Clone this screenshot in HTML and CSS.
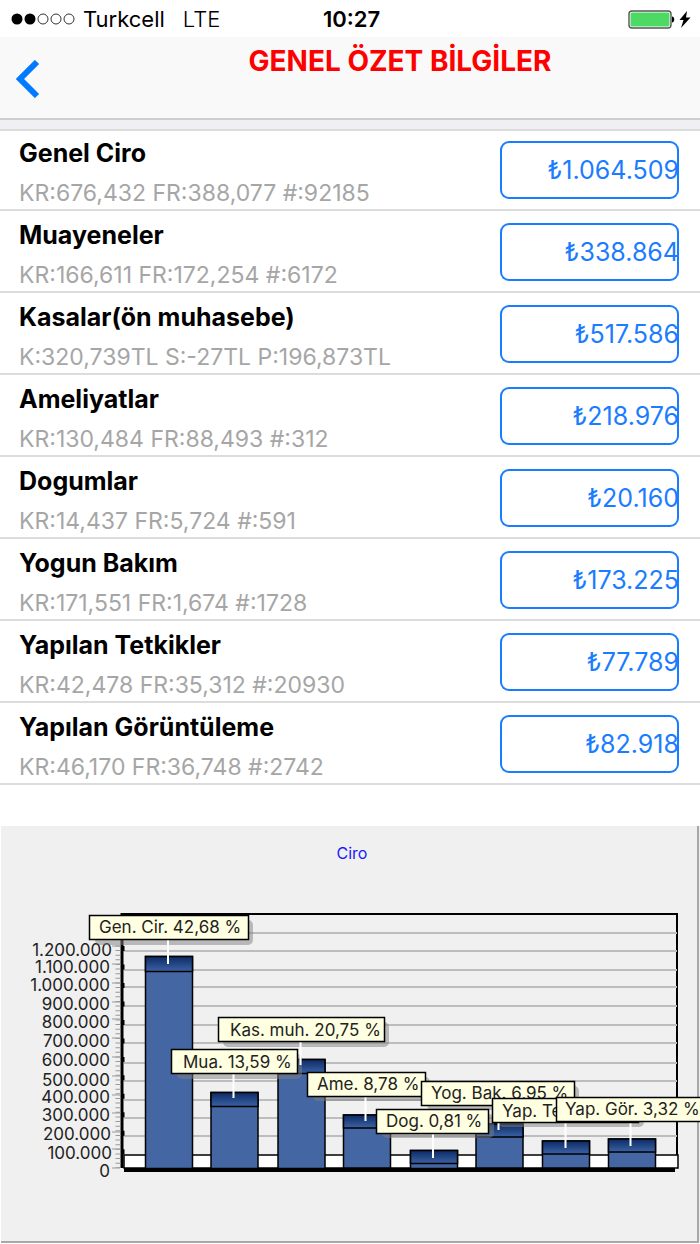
FILE: index.html
```html
<!DOCTYPE html>
<html lang="tr">
<head>
  <meta charset="UTF-8" />
  <meta name="viewport" content="width=device-width, initial-scale=1.0"/>
  <title>Genel Özet Bilgiler</title>
  <link rel="stylesheet" href="styles.css">
</head>
<body>

<div class="status-bar">
  <div class="carrier">
    <svg width="64" height="12" viewBox="0 0 64 12" aria-hidden="true">
      <circle cx="6" cy="6" r="5.5"/>
      <circle cx="19" cy="6" r="5.5"/>
      <circle class="empty" cx="32" cy="6" r="5"/>
      <circle class="empty" cx="45" cy="6" r="5"/>
      <circle class="empty" cx="58" cy="6" r="5"/>
    </svg>
    <span>Turkcell</span>
    <span class="network">LTE</span>
  </div>
  <div class="time">10:27</div>
  <div class="battery">
    <svg width="64" height="20" viewBox="0 0 64 20" aria-hidden="true">
      <rect x="1" y="2" width="42" height="17" rx="3" fill="#fff" stroke="#555" stroke-width="1.4"/>
      <rect x="2.5" y="3.5" width="39" height="14" rx="1.5" fill="#4cd964"/>
      <path d="M44 7.5c3 0 3 6 0 6z" fill="#000"/>
      <path d="M59 2l-7.500 9h4l-2.500 8 9.500-10.500h-4.500z" fill="#000"/>
    </svg>
  </div>
</div>

<header class="nav-bar">
  <button class="back" aria-label="Geri">
    <svg width="24" height="38" viewBox="0 0 24 38" aria-hidden="true">
      <path d="M21 2L4 19l17 17" fill="none" stroke="#007aff" stroke-width="6"/>
    </svg>
  </button>
  <h1>GENEL ÖZET BİLGİLER</h1>
</header>

<ul class="summary-list">
  <li>
    <div class="info"><h2>Genel Ciro</h2><p>KR:676,432 FR:388,077 #:92185</p></div>
    <button class="amount">₺1.064.509</button>
  </li>
  <li>
    <div class="info"><h2>Muayeneler</h2><p>KR:166,611 FR:172,254 #:6172</p></div>
    <button class="amount">₺338.864</button>
  </li>
  <li>
    <div class="info"><h2>Kasalar(ön muhasebe)</h2><p>K:320,739TL S:-27TL P:196,873TL</p></div>
    <button class="amount">₺517.586</button>
  </li>
  <li>
    <div class="info"><h2>Ameliyatlar</h2><p>KR:130,484 FR:88,493 #:312</p></div>
    <button class="amount">₺218.976</button>
  </li>
  <li>
    <div class="info"><h2>Dogumlar</h2><p>KR:14,437 FR:5,724 #:591</p></div>
    <button class="amount">₺20.160</button>
  </li>
  <li>
    <div class="info"><h2>Yogun Bakım</h2><p>KR:171,551 FR:1,674 #:1728</p></div>
    <button class="amount">₺173.225</button>
  </li>
  <li>
    <div class="info"><h2>Yapılan Tetkikler</h2><p>KR:42,478 FR:35,312 #:20930</p></div>
    <button class="amount">₺77.789</button>
  </li>
  <li>
    <div class="info"><h2>Yapılan Görüntüleme</h2><p>KR:46,170 FR:36,748 #:2742</p></div>
    <button class="amount">₺82.918</button>
  </li>
</ul>

<div class="chart">
  <svg viewBox="0 0 700 418" role="img" aria-label="Ciro">
    <defs>
      <linearGradient id="cap" x1="0" y1="0" x2="0" y2="1">
        <stop offset="0" stop-color="#0c2a66"/>
        <stop offset="1" stop-color="#3c62a4"/>
      </linearGradient>
    </defs>

    <text class="chart-title" x="352" y="34">Ciro</text>

    <!-- frame, floor and grid -->
    <path d="M123 89H677V331" fill="none" stroke="#000" stroke-width="2"/>
    <path class="grid" d="M124 108H677M124 126H677M124 145H677M124 162H677M124 181H677M124 200H677M124 218H677M124 238H677M124 256H677M124 275H677M124 293H677M124 311H677"/>
    <rect x="124" y="330" width="554" height="13" fill="#fff" stroke="#000" stroke-width="1.5"/>
    <path d="M124 345H675" stroke="#000" stroke-width="4"/>

    <!-- value axis -->
    <path d="M122 88V343" stroke="#000" stroke-width="3"/>
    <path d="M123 121V343" stroke="#000" stroke-width="3" stroke-dasharray="5 13.480"/>
    <path d="M118 120.500V343" stroke="#999" stroke-width="5" stroke-dasharray="1 3.620"/>
    <path class="ticks" d="M112 121h8M112 139h8M112 158h8M112 177h8M112 194h8M112 213h8M112 232h8M112 251h8M112 270h8M112 288h8M112 307h8M112 324h8M112 343h8"/>
    <g class="axis">
      <text x="112" y="131">1.200.000</text>
      <text x="110" y="148">1.100.000</text>
      <text x="110" y="166">1.000.000</text>
      <text x="110" y="185">900.000</text>
      <text x="110" y="203">800.000</text>
      <text x="110" y="222">700.000</text>
      <text x="110" y="241">600.000</text>
      <text x="110" y="261">500.000</text>
      <text x="110" y="278">400.000</text>
      <text x="110" y="296">300.000</text>
      <text x="111" y="315">200.000</text>
      <text x="112" y="334">100.000</text>
      <text x="110" y="352">0</text>
    </g>

    <!-- bars -->
    <g class="bars">
      <rect x="145.500" y="131.500" width="47" height="212"/>
      <rect x="211" y="267.500" width="47" height="76"/>
      <rect x="278" y="234.500" width="47" height="109"/>
      <rect x="343.500" y="290" width="47" height="53"/>
      <rect x="410.500" y="325.500" width="47" height="18"/>
      <rect x="476" y="299" width="47" height="44"/>
      <rect x="542.500" y="316" width="47" height="27"/>
      <rect x="608.500" y="314" width="47" height="29"/>
    </g>
    <g class="caps">
      <rect x="145.500" y="131.500" width="47" height="15"/>
      <rect x="211" y="267.500" width="47" height="14"/>
      <rect x="278" y="234.500" width="47" height="14"/>
      <rect x="343.500" y="290" width="47" height="13"/>
      <rect x="410.500" y="325.500" width="47" height="13"/>
      <rect x="476" y="299" width="47" height="13"/>
      <rect x="542.500" y="316" width="47" height="13"/>
      <rect x="608.500" y="314" width="47" height="13"/>
    </g>

    <!-- marks -->
    <g class="shadows">
      <rect x="95" y="95" width="158" height="25" rx="5"/>
      <rect x="223" y="197" width="166" height="25" rx="5"/>
      <rect x="177" y="229" width="125" height="25" rx="5"/>
      <rect x="313" y="252" width="117" height="24" rx="5"/>
      <rect x="427" y="261" width="152" height="24" rx="5"/>
      <rect x="382" y="289" width="112" height="24" rx="5"/>
      <rect x="498" y="278" width="146" height="24" rx="5"/>
    </g>
    <path class="leaders" d="M168 115V139M233.500 249V273M300.500 217V240M365.500 271V296M433 309V333M498.500 298V305M565.500 297V323M630.500 297V321"/>
    <g class="marks">
      <rect x="218.500" y="192.500" width="166" height="24"/>
      <text x="230" y="211">Kas. muh. 20,75 %</text>
      <rect x="89.500" y="90.500" width="159" height="24"/>
      <text x="99" y="108">Gen. Cir. 42,68 %</text>
      <rect x="171.500" y="224.500" width="126" height="24"/>
      <text x="183" y="243">Mua. 13,59 %</text>
      <rect x="307.500" y="247.500" width="118" height="24"/>
      <text x="317" y="265">Ame. 8,78 %</text>
      <rect x="376.500" y="284.500" width="112" height="24"/>
      <text x="386" y="302">Dog. 0,81 %</text>
      <rect x="421.500" y="256.500" width="153" height="24"/>
      <text x="431" y="274">Yog. Bak. 6,95 %</text>
      <rect x="492.500" y="273.500" width="146" height="24"/>
      <text x="502" y="292">Yap. Tet. 3,12 %</text>
      <rect x="556.500" y="272.500" width="150" height="24"/>
      <text x="565" y="290">Yap. Gör. 3,32 %</text>
    </g>
  </svg>
</div>

</body>
</html>
```
FILE: styles.css
```css
* {
  box-sizing: border-box;
}

body {
  margin: 0;
  background: #fff;
  color: #000;
  font-family: Inter, "Noto Sans", sans-serif;
}

h1, h2, p, ul {
  margin: 0;
  padding: 0;
}

.status-bar {
  display: grid;
  grid-template-columns: 1fr auto 1fr;
  align-items: center;
  height: 37px;
  padding: 0 8px 0 11px;
  font-size: 22px;
  line-height: 38px;
}

.carrier {
  display: flex;
  align-items: center;
  gap: 8px;
}

.carrier .empty {
  fill: none;
  stroke: #333;
}

.network {
  margin-left: 10px;
  font-weight: 300;
}

.time {
  font-weight: 600;
}

.battery {
  display: flex;
  justify-content: flex-end;
}

.nav-bar {
  display: grid;
  grid-template-columns: 100px 1fr;
  align-items: center;
  height: 83px;
  background: #f9f9f9;
  border-bottom: 2px solid #cfcfcf;
}

.back {
  display: flex;
  padding: 2px 16px 0;
  border: none;
  background: none;
  cursor: pointer;
}

.nav-bar h1 {
  align-self: start;
  padding-top: 8px;
  font-size: 28px;
  line-height: 32px;
  font-weight: 700;
  text-align: center;
  color: #f00;
}

.summary-list {
  list-style: none;
  border-top: 9px solid #efeff4;
  box-shadow: inset 0 2px #dcdcdc;
}

.summary-list li {
  display: flex;
  align-items: center;
  justify-content: space-between;
  height: 82px;
  padding: 2px 21px 0 19px;
  border-bottom: 2px solid #dcdcdc;
}

.info {
  padding-top: 5px;
}

.info h2 {
  font-size: 25px;
  line-height: 40px;
  font-weight: 700;
}

.info p {
  font-size: 23px;
  line-height: 40px;
  color: #a6a6a6;
}

.amount {
  width: 179px;
  height: 58px;
  padding: 0;
  border: none;
  border-radius: 9px;
  box-shadow: inset 0 0 0 2px #1a7cff;
  background: #fff;
  color: #1a7cff;
  font-family: inherit;
  font-size: 25px;
  text-align: right;
  cursor: pointer;
}

/* Chart */
.chart {
  margin-top: 40px;
  background: #f0f0f0;
  box-shadow: inset 1px 1px #fff, inset -1px 0 #eee, inset -3px -2px #a8a8a8;
}

.chart svg {
  display: block;
  width: 100%;
  height: auto;
  font-size: 17px;
}

.chart-title {
  font-size: 16px;
  fill: #1a1aff;
  text-anchor: middle;
}

.grid {
  stroke: #bdbdbd;
  stroke-width: 2;
}

.ticks {
  stroke: #999;
}

.axis {
  fill: #222;
  text-anchor: end;
}

.bars rect {
  fill: #4467a4;
  stroke: #000;
  stroke-width: 1.5;
}

.caps rect {
  fill: url(#cap);
  stroke: #000;
  stroke-width: 1.5;
}

.shadows rect {
  fill: #808080;
  fill-opacity: 0.5;
}

.leaders {
  stroke: #fff;
  stroke-width: 2;
}

.marks rect {
  fill: #ffffe1;
  stroke: #000;
  stroke-width: 1.5;
}

.marks text {
  fill: #222;
}
```
